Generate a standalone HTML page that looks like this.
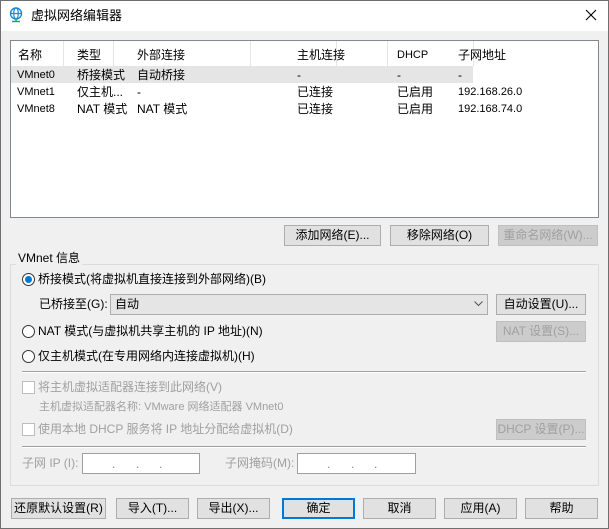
<!DOCTYPE html>
<html><head><meta charset="utf-8"><style>
*{margin:0;padding:0;box-sizing:border-box}
body{width:609px;height:529px;background:#f0f0f0;font-family:"Liberation Sans","Noto Sans CJK SC",sans-serif;font-size:12px;color:#000;position:relative;overflow:hidden}
.a{position:absolute;white-space:nowrap;line-height:16px}
.frame{position:absolute;left:0;top:0;width:609px;height:529px;border:1px solid #6f6f6f;pointer-events:none}
.title{position:absolute;left:1px;top:1px;width:607px;height:30px;background:#fff}
.list{position:absolute;left:10px;top:40px;width:589px;height:178px;background:#fff;border:1px solid #828790}
.btn{position:absolute;height:21px;background:#e1e1e1;border:1px solid #adadad;text-align:center;line-height:19px;font-size:12px;white-space:nowrap}
.dis{color:#a0a0a0;background:#cccccc;border-color:#bfbfbf}
.hs{position:absolute;top:0;width:1px;height:25px;background:#e5e5e5}
.radio{position:absolute;width:13px;height:13px;border:1px solid #333;border-radius:50%;background:#fff}
.chk{position:absolute;width:13px;height:13px;border:1px solid #bcbcbc;background:#fff}
.gray{color:#a0a0a0}
.ip{position:absolute;height:21px;background:#fff;border:1px solid #a0a0a0;color:#888}
.s{font-size:11px}
</style></head><body>
<div class="title"></div>
<svg class="a" style="left:9px;top:7px" width="14" height="16" viewBox="0 0 14 16"><circle cx="7" cy="6.5" r="5.5" fill="none" stroke="#1e88d6" stroke-width="1.4"/><ellipse cx="7" cy="6.5" rx="2.3" ry="5.5" fill="none" stroke="#1e88d6" stroke-width="1.2"/><line x1="1.5" y1="6.5" x2="12.5" y2="6.5" stroke="#1e88d6" stroke-width="1.2"/><line x1="7" y1="12" x2="7" y2="14" stroke="#1a9e6a" stroke-width="1.4"/><line x1="3" y1="14.5" x2="11" y2="14.5" stroke="#1a9e6a" stroke-width="1.4"/></svg>
<div class="a" style="left:31px;top:8px;font-size:13px">虚拟网络编辑器</div>
<svg class="a" style="left:585px;top:9px" width="12" height="12"><path d="M1 1L11 11M11 1L1 11" stroke="#000" stroke-width="1.1"/></svg>

<div class="list">
 <div class="hs" style="left:52px"></div><div class="hs" style="left:102px"></div><div class="hs" style="left:239px"></div><div class="hs" style="left:325px"></div><div class="hs" style="left:376px"></div><div class="hs" style="left:462px"></div>
 <div class="a" style="left:0;top:25px;width:462px;height:17px;background:#e5e5e5"></div>
 <div class="a" style="left:7px;top:6px">名称</div><div class="a" style="left:66px;top:6px">类型</div><div class="a" style="left:126px;top:6px">外部连接</div><div class="a" style="left:286px;top:6px">主机连接</div><div class="a s" style="left:386px;top:6px">DHCP</div><div class="a" style="left:447px;top:6px">子网地址</div>
 <div class="a s" style="left:6px;top:26px">VMnet0</div><div class="a" style="left:66px;top:26px">桥接模式</div><div class="a" style="left:126px;top:26px">自动桥接</div><div class="a" style="left:286px;top:26px">-</div><div class="a" style="left:386px;top:26px">-</div><div class="a" style="left:447px;top:26px">-</div>
 <div class="a s" style="left:6px;top:43px">VMnet1</div><div class="a" style="left:66px;top:43px">仅主机...</div><div class="a" style="left:126px;top:43px">-</div><div class="a" style="left:286px;top:43px">已连接</div><div class="a" style="left:386px;top:43px">已启用</div><div class="a s" style="left:447px;top:43px">192.168.26.0</div>
 <div class="a s" style="left:6px;top:60px">VMnet8</div><div class="a" style="left:66px;top:60px">NAT 模式</div><div class="a" style="left:126px;top:60px">NAT 模式</div><div class="a" style="left:286px;top:60px">已连接</div><div class="a" style="left:386px;top:60px">已启用</div><div class="a s" style="left:447px;top:60px">192.168.74.0</div>
</div>

<div class="btn" style="left:284px;top:225px;width:97px">添加网络(E)...</div>
<div class="btn" style="left:390px;top:225px;width:99px">移除网络(O)</div>
<div class="btn dis" style="left:498px;top:225px;width:100px">重命名网络(W)...</div>

<div class="a" style="left:10px;top:264px;width:589px;height:222px;border:1px solid #dcdcdc"></div>
<div class="a" style="left:16px;top:250px;background:#f0f0f0;padding:0 2px">VMnet 信息</div>

<div class="radio" style="left:22px;top:273px"></div><div class="a" style="left:25px;top:276px;width:7px;height:7px;border-radius:50%;background:#0078d7"></div>
<div class="a" style="left:38px;top:271px">桥接模式(将虚拟机直接连接到外部网络)(B)</div>
<div class="a" style="left:39px;top:296px">已桥接至(G):</div>
<div class="a" style="left:110px;top:294px;width:378px;height:21px;background:#e5e5e5;border:1px solid #adadad"></div>
<div class="a" style="left:115px;top:296px">自动</div>
<svg class="a" style="left:474px;top:301px" width="9" height="6"><path d="M0.5 0.5L4.5 4.5L8.5 0.5" fill="none" stroke="#555"/></svg>
<div class="btn" style="left:496px;top:294px;width:90px">自动设置(U)...</div>

<div class="radio" style="left:22px;top:325px"></div>
<div class="a" style="left:38px;top:323px">NAT 模式(与虚拟机共享主机的 IP 地址)(N)</div>
<div class="btn dis" style="left:496px;top:321px;width:90px">NAT 设置(S)...</div>
<div class="radio" style="left:22px;top:350px"></div>
<div class="a" style="left:38px;top:348px">仅主机模式(在专用网络内连接虚拟机)(H)</div>

<div class="a" style="left:22px;top:371px;width:564px;height:2px;background:#a0a0a0;border-bottom:1px solid #fff"></div>
<div class="chk" style="left:22px;top:381px"></div>
<div class="a gray" style="left:38px;top:379px">将主机虚拟适配器连接到此网络(V)</div>
<div class="a gray s" style="left:39px;top:399px">主机虚拟适配器名称: VMware 网络适配器 VMnet0</div>
<div class="chk" style="left:22px;top:423px"></div>
<div class="a gray" style="left:38px;top:421px">使用本地 DHCP 服务将 IP 地址分配给虚拟机(D)</div>
<div class="btn dis" style="left:496px;top:419px;width:90px">DHCP 设置(P)...</div>
<div class="a" style="left:22px;top:446px;width:564px;height:2px;background:#a0a0a0;border-bottom:1px solid #fff"></div>
<div class="a gray" style="left:22px;top:455px">子网 IP (I):</div>
<div class="ip" style="left:82px;top:453px;width:118px"><span class="a" style="left:29px;top:2px">.</span><span class="a" style="left:53px;top:2px">.</span><span class="a" style="left:76px;top:2px">.</span></div>
<div class="a gray" style="left:225px;top:455px">子网掩码(M):</div>
<div class="ip" style="left:297px;top:453px;width:119px"><span class="a" style="left:29px;top:2px">.</span><span class="a" style="left:53px;top:2px">.</span><span class="a" style="left:76px;top:2px">.</span></div>

<div class="btn" style="left:11px;top:498px;width:95px">还原默认设置(R)</div>
<div class="btn" style="left:116px;top:498px;width:73px">导入(T)...</div>
<div class="btn" style="left:197px;top:498px;width:73px">导出(X)...</div>
<div class="btn" style="left:282px;top:498px;width:73px;border:2px solid #0078d7;line-height:17px">确定</div>
<div class="btn" style="left:363px;top:498px;width:73px">取消</div>
<div class="btn" style="left:444px;top:498px;width:73px">应用(A)</div>
<div class="btn" style="left:525px;top:498px;width:73px">帮助</div>
<div class="frame"></div>
</body></html>
